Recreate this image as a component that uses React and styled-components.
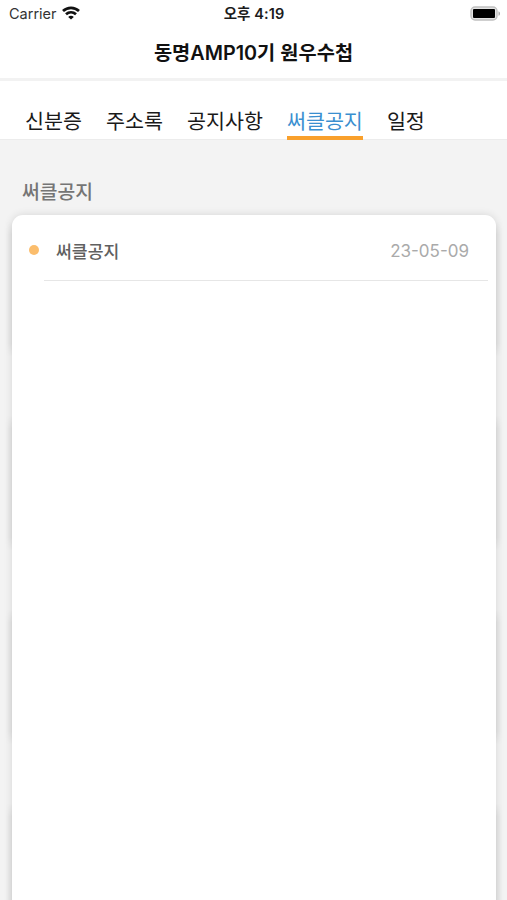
import styled, { createGlobalStyle } from "styled-components";

const GlobalStyle = createGlobalStyle`
  * {
    box-sizing: border-box;
    margin: 0;
    padding: 0;
  }

  body {
    background-color: #f3f3f3;
    font-family: Inter, "Noto Sans CJK KR", sans-serif;
    overflow: hidden;
  }
`;

const Screen = styled.div`
  height: 900px;
  display: flex;
  flex-direction: column;
  background-color: #f3f3f3;
  overflow: hidden;
`;

const StatusBar = styled.div`
  height: 27px;
  display: grid;
  grid-template-columns: 1fr auto 1fr;
  align-items: center;
  padding: 0 6px 0 7px;
  background-color: #fff;
  color: #1c1c1c;
  line-height: 27px;

  .carrier {
    display: flex;
    align-items: center;
    gap: 5px;
    padding-left: 2px;
    font-size: 14.5px;
    color: #333;

    svg {
      margin-top: -1px;
    }
  }

  .time {
    font-size: 14.5px;
    font-weight: 600;
    letter-spacing: 0.1px;
  }

  .battery {
    justify-self: end;
    display: block;
  }
`;

const Header = styled.header`
  height: 54px;
  padding-top: 11px;
  background-color: #fff;
  border-bottom: 3px solid #f2f2f2;
  text-align: center;

  h1 {
    font-size: 19.8px;
    font-weight: 600;
    line-height: 30px;
    color: #111;
  }
`;

const Tabs = styled.nav`
  height: 59px;
  flex-shrink: 0;
  display: flex;
  gap: 24px;
  padding: 22px 25px 0;
  background-color: #fff;
  border-bottom: 1px solid #ececec;
`;

const Tab = styled.a`
  height: 37px;
  font-size: 20.65px;
  line-height: 37px;
  white-space: nowrap;
  color: ${({ $active }) => ($active ? "#3a8fd0" : "#1a1a1a")};
  box-shadow: ${({ $active }) => ($active ? "inset 0 -4px #f9a02c" : "none")};
`;

const Content = styled.main`
  flex: 1;
  display: flex;
  flex-direction: column;
  padding: 0 11px 0 12px;

  h2 {
    padding: 38px 10px 0;
    height: 75px;
    font-size: 19.3px;
    font-weight: 500;
    line-height: 28px;
    color: #757575;
  }
`;

const Card = styled.section`
  position: relative;
  flex: 1;
  margin-bottom: -20px;
  border-radius: 11px;
  background-color: #fff;
  box-shadow: 0 0 8px rgba(0, 0, 0, 0.12);

  /* the shadow gets deeper in bands down both sides */
  &::before,
  &::after {
    content: "";
    position: absolute;
    top: 6px;
    bottom: 0;
    width: 7px;
    mask-image: repeating-linear-gradient(#0000 0, #000 14px, #000 122px, #0000 136px, #0000 194px);
  }

  &::before {
    right: 100%;
    background: linear-gradient(to left, rgba(0, 0, 0, 0.06), transparent);
  }

  &::after {
    left: 100%;
    background: linear-gradient(to right, rgba(0, 0, 0, 0.06), transparent);
  }
`;

const Notice = styled.div`
  height: 66px;
  margin: 0 8px 0 32px;
  display: flex;
  align-items: center;
  padding: 5px 19px 0 0;
  border-bottom: 1px solid #e6e6e6;

  .dot {
    width: 10px;
    height: 10px;
    margin-left: -15px;
    border-radius: 50%;
    background-color: #fbbd6c;
  }

  .title {
    margin-left: 17px;
    font-size: 17.2px;
    font-weight: 500;
    color: #606060;
  }

  .date {
    margin-left: auto;
    padding-top: 1px;
    font-size: 17px;
    color: #aaa;
  }
`;

const WifiIcon = () => (
  <svg width="18" height="14" viewBox="0 0 18 14" fill="none" stroke="#111" strokeWidth="2.7">
    <path d="M1 5C5.5.7 12.5.7 17 5" />
    <path d="M4 8.3c2.9-2.7 7.1-2.7 10 0" />
    <path d="M9 13.5 6.2 10.9c1.6-1.5 4-1.5 5.6 0Z" fill="#111" stroke="none" />
  </svg>
);

const BatteryIcon = () => (
  <svg className="battery" width="31" height="15" viewBox="0 0 31 15">
    <rect x="1" y="1" width="26" height="13" rx="4" fill="#e4e4e4" stroke="#c0c0c0" strokeWidth="1.4" />
    <rect x="3" y="3" width="22" height="9" rx="1" fill="#000" />
    <path d="M28.5 5.2c2 .8 2 3.8 0 4.6Z" fill="#aaa" />
  </svg>
);

const tabs = ["신분증", "주소록", "공지사항", "써클공지", "일정"];
const notices = [{ title: "써클공지", date: "23-05-09" }];

const App = () => {
  return <>
    <GlobalStyle />
    <Screen lang="ko">
      <StatusBar>
        <div className="carrier">Carrier <WifiIcon /></div>
        <div className="time">오후 4:19</div>
        <BatteryIcon />
      </StatusBar>

      <Header>
        <h1>동명AMP10기 원우수첩</h1>
      </Header>

      <Tabs>
        {tabs.map((tab) => (
          <Tab key={tab} $active={tab === "써클공지"}>{tab}</Tab>
        ))}
      </Tabs>

      <Content>
        <h2>써클공지</h2>
        <Card>
          {notices.map((notice) => (
            <Notice key={notice.date}>
              <span className="dot" />
              <span className="title">{notice.title}</span>
              <span className="date">{notice.date}</span>
            </Notice>
          ))}
        </Card>
      </Content>
    </Screen>
  </>;
};

export default App;
